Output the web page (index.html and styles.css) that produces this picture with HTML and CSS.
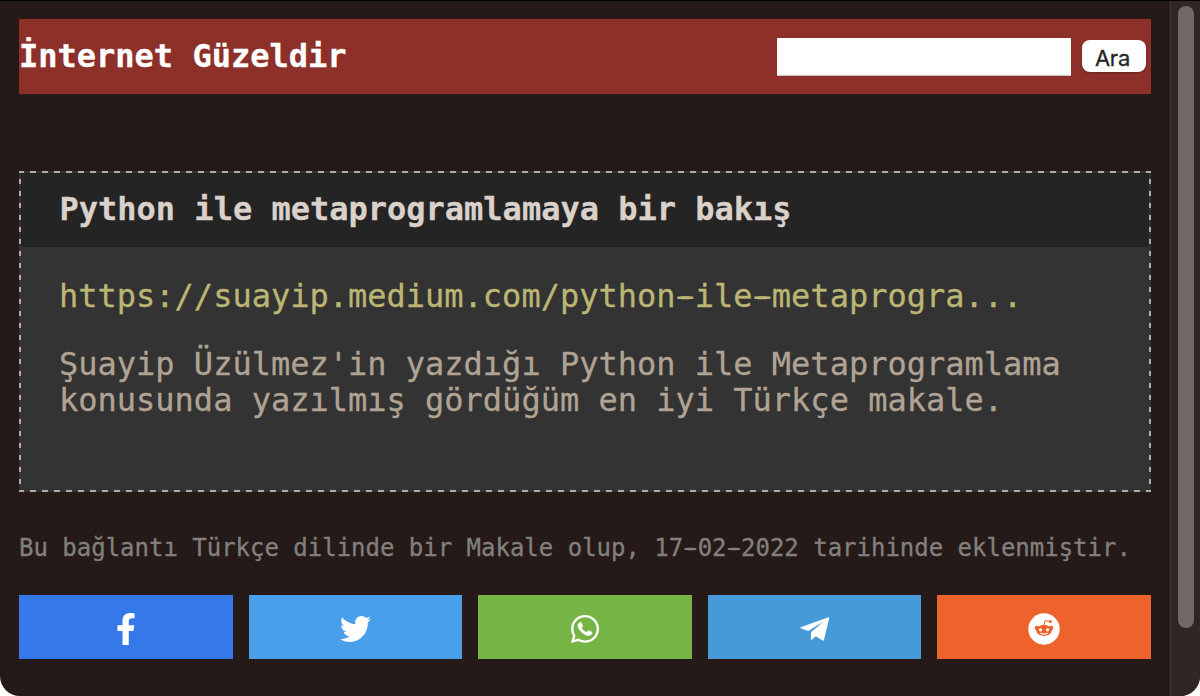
FILE: index.html
```html
<!DOCTYPE html>
<html lang="tr">
<head>
<meta charset="utf-8">
<title>İnternet Güzeldir</title>
<link rel="stylesheet" href="styles.css">
</head>
<body>
<div class="window">
  <main class="page">
    <header class="header">
      <h1 class="brand">İnternet Güzeldir</h1>
      <form class="search">
        <input class="search-input" type="text" aria-label="Ara">
        <button class="search-button" type="button">Ara</button>
      </form>
    </header>
    <article class="card">
      <h2 class="card-title">Python ile metaprogramlamaya bir bakış</h2>
      <div class="card-body">
        <a class="link">https://suayip.medium.com/python<span class="dash">-</span>ile<span class="dash">-</span>metaprogra...</a>
        <p class="text">Şuayip Üzülmez'in yazdığı Python ile Metaprogramlama konusunda yazılmış gördüğüm en iyi Türkçe makale.</p>
      </div>
    </article>
    <p class="meta">Bu bağlantı Türkçe dilinde bir Makale olup, 17<span class="dash">-</span>02<span class="dash">-</span>2022 tarihinde eklenmiştir.</p>
    <nav class="share">
      <a class="share-item facebook"><svg width="20" height="32" viewBox="0 0 320 512"><path d="M279.14 288l14.22-92.66h-88.91v-60.13c0-25.35 12.42-50.06 52.24-50.06h40.42V6.26S260.43 0 225.36 0c-73.22 0-121.08 44.38-121.08 124.72v70.62H22.89V288h81.39v224h100.17V288z"/></svg></a>
      <a class="share-item twitter"><svg width="31" height="32" viewBox="0 0 512 512" preserveAspectRatio="none"><path d="M459.37 151.716c.325 4.548.325 9.097.325 13.645 0 138.72-105.583 298.558-298.558 298.558-59.452 0-114.68-17.219-161.137-47.106 8.447.974 16.568 1.299 25.34 1.299 49.055 0 94.213-16.568 130.274-44.832-46.132-.975-84.792-31.188-98.112-72.772 6.498.974 12.995 1.624 19.818 1.624 9.421 0 18.843-1.3 27.614-3.573-48.081-9.747-84.143-51.98-84.143-102.985v-1.299c13.969 7.797 30.214 12.67 47.431 13.319-28.264-18.843-46.781-51.005-46.781-87.391 0-19.492 5.197-37.36 14.294-52.954 51.655 63.675 129.3 105.258 216.365 109.807-1.624-7.797-2.599-15.918-2.599-24.04 0-57.828 46.782-104.934 104.934-104.934 30.213 0 57.502 12.67 76.67 33.137 23.715-4.548 46.456-13.32 66.599-25.34-7.798 24.366-24.366 44.833-46.132 57.827 21.117-2.273 41.584-8.122 60.426-16.243-14.292 20.791-32.161 39.308-52.628 54.253z"/></svg></a>
      <a class="share-item whatsapp"><svg width="28" height="32" viewBox="0 0 448 512"><path d="M380.9 97.1C339 55.1 283.2 32 223.9 32c-122.4 0-222 99.6-222 222 0 39.1 10.2 77.3 29.6 111L0 480l117.7-30.9c32.4 17.7 68.9 27 106.1 27h.1c122.3 0 224.1-99.6 224.1-222 0-59.3-25.2-115-67.1-157zm-157 341.6c-33.2 0-65.7-8.9-94-25.7l-6.7-4-69.8 18.3L72 359.2l-4.4-7c-18.5-29.4-28.2-63.3-28.2-98.2 0-101.7 82.8-184.5 184.6-184.5 49.3 0 95.6 19.2 130.4 54.1 34.8 34.900 56.2 81.2 56.1 130.5 0 101.8-84.9 184.6-186.6 184.6z"/><path class="phone" d="M325 300.500c-5.500-2.800-32.800-16.200-37.900-18-5.100-1.900-8.800-2.800-12.500 2.800-3.700 5.600-14.300 18-17.600 21.800-3.200 3.700-6.500 4.200-12 1.400-32.600-16.300-54-29.100-75.500-66-5.700-9.800 5.700-9.100 16.300-30.300 1.800-3.700.9-6.900-.5-9.700-1.400-2.800-12.500-30.100-17.100-41.200-4.500-10.800-9.100-9.300-12.500-9.500-3.200-.2-6.900-.2-10.600-.2-3.700 0-9.700 1.400-14.800 6.900-5.100 5.600-19.400 19-19.400 46.300 0 27.300 19.900 53.700 22.600 57.400 2.800 3.700 39.100 59.700 94.800 83.800 35.200 15.200 49 16.500 66.600 13.900 10.700-1.600 32.800-13.400 37.400-26.400 4.600-13 4.600-24.100 3.200-26.400-1.300-2.500-5-3.900-10.500-6.600z"/></svg></a>
      <a class="share-item telegram"><svg width="32" height="32" viewBox="0 0 32 32"><path d="M29.500 4.200L1.700 14.200c-.6.3-.6.800 0 1.100L9.200 18L24.600 8.400L12 19.300V26.500q.2.800.8.300L16.800 23.200L23.700 27.600q1 .5 1.300-.6L30.200 4.900q.1-.9-.7-.7z"/></svg></a>
      <a class="share-item reddit"><svg width="32" height="32" viewBox="0 0 32 32"><circle cx="16" cy="16" r="15.700"/><g class="face"><ellipse cx="16" cy="17.400" rx="7.700" ry="5.600"/><circle cx="8.900" cy="15" r="2.200"/><circle cx="23.100" cy="15" r="2.200"/><circle cx="22.300" cy="8.400" r="1.500"/></g><path class="antenna" d="M16 12.500L17.200 7.600L21.500 8.300"/><circle cx="12.500" cy="16.800" r="1.600"/><circle cx="19.500" cy="16.800" r="1.600"/><path class="smile" d="M12.800 20.300q3.200 1.700 6.400 0"/></svg></a>
    </nav>
  </main>
  <aside class="scroll-track"><div class="scroll-thumb"></div></aside>
</div>
</body>
</html>
```
FILE: styles.css
```css
* { box-sizing: border-box; }
body { margin: 0; background: #fff; font-family: "DejaVu Sans Mono", monospace; }
.window { display: flex; height: 696px; overflow: hidden; background: #251a18; border-top: 1px solid #000; border-radius: 0 0 20px 20px; }
.page { width: 1170px; padding: 18px 19px 0; -webkit-text-stroke: .3px; }
.header { display: flex; align-items: center; justify-content: space-between; height: 75px; padding-right: 5px; background: #8e302a; }
.brand { margin: 0; padding-bottom: 2px; color: #fff; font-size: 32px; line-height: 38px; }
.search { display: flex; align-items: center; gap: 11px; margin: 0; }
.search-input { width: 294px; height: 38px; padding: 0 6px; border: 0; border-bottom: 1px solid #c9c4c2; border-radius: 0; background: #fff; outline: 0; }
.search-button { width: 64px; height: 32px; margin-top: -1px; padding: 4px 3px 0 0; border: 0; border-radius: 8px; background: #fff; color: #252525; font: 22px/28px Inter, sans-serif; letter-spacing: -.2px; box-shadow: 0 1px 2px rgba(0,0,0,.3); }
.card { height: 321px; margin-top: 77px; padding: 2px; background:
  repeating-linear-gradient(90deg, #b0aaa8 0 5px, #333 5px 11px, #b0aaa8 11px 12px) 0 0 / 100% 2px no-repeat,
  repeating-linear-gradient(90deg, #b0aaa8 0 5px, #333 5px 11px, #b0aaa8 11px 12px) 0 100% / 100% 2px no-repeat,
  repeating-linear-gradient(180deg, #b0aaa8 0 1px, #333 1px 8px, #b0aaa8 8px 12px) 0 0 / 2px 100% no-repeat,
  repeating-linear-gradient(180deg, #b0aaa8 0 1px, #333 1px 8px, #b0aaa8 8px 12px) 100% 0 / 2px 100% no-repeat,
  #333; }
.card-title { height: 74px; margin: 0; padding: 17px 38.500px 0; background: #242424; color: #dbd1cb; font-size: 32px; line-height: 38px; }
.card-body { padding: 30px 38px 0; font-size: 32px; }
.link { display: block; color: #bbb673; line-height: 38px; }
.text { margin: 31px 0 0; color: #b0a394; line-height: 36px; }
.dash { text-shadow: .12em 0 currentColor, -.12em 0 currentColor; }
.meta { margin: 41px 0 0; color: #82807d; font-size: 24px; line-height: 30px; letter-spacing: -.01px; white-space: nowrap; }
.share { display: flex; gap: 16px; margin-top: 32px; }
.share-item { flex: 1; display: flex; align-items: center; justify-content: center; height: 64px; padding-top: 4px; }
.share-item svg { fill: #fff; }
.facebook { background: #3578e9; }
.twitter { background: #4a9fea; }
.whatsapp { background: #77b446; }
.phone { stroke: #fff; stroke-width: 8; }
.telegram { background: #469ad8; }
.reddit { background: #ee622b; }
.face { fill: #ee622b; }
.antenna { fill: none; stroke: #ee622b; stroke-width: 1; }
.smile { fill: none; stroke: #fff; stroke-width: 1.200; stroke-linecap: round; }
.scroll-track { width: 30px; padding: 5px 0 0 7px; border-left: 1px solid #443a38; background: #302624; }
.scroll-thumb { width: 16px; height: 622px; border-radius: 8px; background: #736866; }
```
